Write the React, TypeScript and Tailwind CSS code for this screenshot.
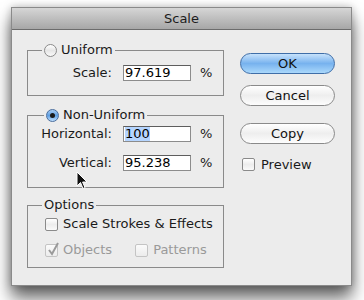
import React from 'react'

const font = { fontFamily: '"DejaVu Sans", "Lucida Grande", sans-serif' }

function Radio({ on }: { on?: boolean }) {
  return (
    <span
      className={
        on
          ? 'w-[13px] h-[13px] rounded-full border border-[#4a6e9e] bg-gradient-to-b from-[#a9cdf3] via-[#5f9fe2] to-[#bfe0ff] flex items-center justify-center shrink-0'
          : 'w-[13px] h-[13px] rounded-full border border-[#8a8a8a] bg-gradient-to-b from-[#ffffff] via-[#e6e6e6] to-[#fafafa] shrink-0'
      }
    >
      {on && <span className="w-[5px] h-[5px] rounded-full bg-[#1a1a1a]" />}
    </span>
  )
}

function Check({ checked, disabled }: { checked?: boolean; disabled?: boolean }) {
  return (
    <span
      className={
        disabled
          ? 'relative block w-[13px] h-[13px] rounded-[2px] border border-[#c4c4c4] bg-gradient-to-b from-[#fbfbfb] to-[#ececec] shrink-0'
          : 'relative block w-[13px] h-[13px] rounded-[2px] border border-[#8a8a8a] bg-gradient-to-b from-[#ffffff] via-[#ededed] to-[#fafafa] shrink-0'
      }
    >
      {checked && (
        <svg className="absolute left-[1px] -top-[3px]" width="13" height="14" viewBox="0 0 13 14">
          <path d="M2 8 L5 12 L11 1" fill="none" stroke="#9a9a9a" strokeWidth="2" />
        </svg>
      )}
    </span>
  )
}

function Field({ label, value, selected }: { label: string; value: string; selected?: boolean }) {
  return (
    <div className="flex items-center">
      <span className="w-[84px] text-right text-[13px] leading-[16px] text-[#1a1a1a]">{label}</span>
      <div className="ml-[11px] w-[68px] h-[16px] bg-white border border-[#8c8c8c] border-t-[#5e5e5e] flex items-center pl-[1px] text-[13px] leading-[14px] text-black">
        {selected ? <span className="bg-[#b5d5ff]">{value}</span> : value}
      </div>
      <span className="ml-[9px] text-[13px] leading-[16px] text-[#1a1a1a]">%</span>
    </div>
  )
}

function Btn({ label, primary }: { label: string; primary?: boolean }) {
  return (
    <button
      className={
        primary
          ? 'w-[95px] h-[21px] rounded-full border border-[#3f6ea8] bg-gradient-to-b from-[#c7e2fb] via-[#77b2ee] to-[#aad8fb] text-[13px] text-[#111] leading-[19px]'
          : 'w-[95px] h-[21px] rounded-full border border-[#8a8a8a] bg-gradient-to-b from-[#ffffff] via-[#eeeeee] to-[#fdfdfd] text-[13px] text-[#111] leading-[19px]'
      }
    >
      {label}
    </button>
  )
}

export default function App() {
  return (
    <div className="relative w-[364px] h-[300px] bg-white pt-[7px] pl-[11px] overflow-hidden" style={font}>
      <div className="w-[341px] h-[279px] bg-[#ececec] border border-[#8a8a8a] shadow-[0_12px_16px_rgba(0,0,0,0.6),0_0_8px_rgba(0,0,0,0.25)] flex flex-col">
        {/* title bar */}
        <div className="h-[22px] bg-gradient-to-b from-[#d6d6d6] to-[#a7a7a7] border-b border-[#6c6c6c] flex items-center justify-center text-[13px] text-[#1c1c1c]">
          Scale
        </div>

        <div className="flex pl-[15px] pt-[12px]">
          {/* left column */}
          <div className="w-[197px] flex flex-col">
            <fieldset className="border border-[#8a8a8a] pl-0 pb-[14px]">
              <legend className="ml-[14px] px-[2px] flex items-center gap-[4px] h-[16px] text-[13px] text-[#1a1a1a]">
                <Radio />
                <span>Uniform</span>
              </legend>
              <div className="pt-[7px]">
                <Field label="Scale:" value="97.619" />
              </div>
            </fieldset>

            <fieldset className="mt-[11px] border border-[#8a8a8a] pb-[16px]">
              <legend className="ml-[16px] px-[2px] flex items-center gap-[4px] h-[16px] text-[13px] text-[#1a1a1a]">
                <Radio on />
                <span>Non-Uniform</span>
              </legend>
              <div className="pt-[3px] flex flex-col gap-[13px]">
                <Field label="Horizontal:" value="100" selected />
                <Field label="Vertical:" value="95.238" />
              </div>
            </fieldset>

            <fieldset className="mt-[9px] border border-[#8a8a8a] pb-[10px]">
              <legend className="ml-[14px] px-[2px] h-[16px] leading-[16px] text-[13px] text-[#1a1a1a]">Options</legend>
              <div className="pt-[4px] pl-[17px] flex flex-col gap-[12px] text-[13px] leading-[14px]">
                <div className="flex items-center gap-[5px] text-[#1a1a1a]">
                  <Check />
                  <span>Scale Strokes &amp; Effects</span>
                </div>
                <div className="flex items-center text-[#9a9a9a]">
                  <Check checked disabled />
                  <span className="ml-[5px]">Objects</span>
                  <span className="ml-[23px] flex"><Check disabled /></span>
                  <span className="ml-[5px]">Patterns</span>
                </div>
              </div>
            </fieldset>
          </div>

          {/* right column */}
          <div className="ml-[16px] pt-[11px] flex flex-col">
            <Btn label="OK" primary />
            <div className="mt-[9px]"><Btn label="Cancel" /></div>
            <div className="mt-[14px]"><Btn label="Copy" /></div>
            <div className="mt-[10px] pl-[2px] flex items-center gap-[6px] text-[13px] text-[#1a1a1a]">
              <Check />
              <span>Preview</span>
            </div>
          </div>
        </div>
      </div>

      {/* mouse cursor */}
      <svg className="absolute left-[76px] top-[171px]" width="12" height="19" viewBox="0 0 12 19">
        <path d="M1 1 L1 15 L4.5 11.5 L7 17.5 L9 16.7 L6.6 11 L11 11 Z" fill="#111" stroke="#fff" strokeWidth="1" />
      </svg>
    </div>
  )
}
